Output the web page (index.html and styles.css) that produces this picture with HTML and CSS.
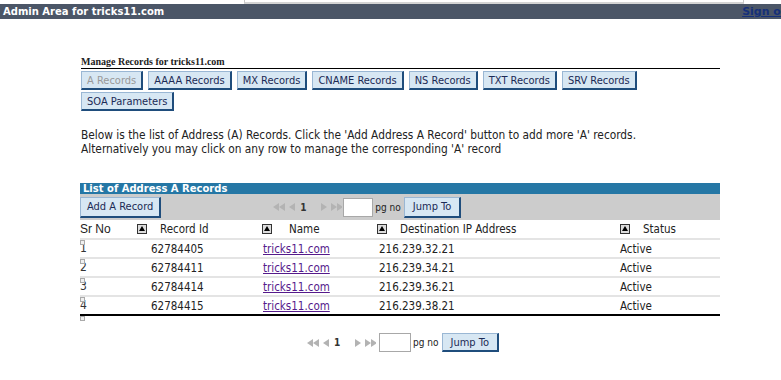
FILE: index.html
```html
<!DOCTYPE html>
<html lang="en">
<head>
    <meta charset="UTF-8">
    <title>Admin Area for tricks11.com</title>
    <link rel="stylesheet" href="styles.css">
</head>
<body>
    <div class="page">
        <div class="topframe"><div class="frame-box"></div></div>
        <div class="header">
            <span class="title">Admin Area for tricks11.com</span>
            <a href="#" class="signout">Sign out</a>
        </div>

        <div class="main">
            <h4 class="manage">Manage Records for tricks11.com</h4>
            <div class="tabs">
                <button class="btn tab" disabled>A Records</button>
                <button class="btn tab">AAAA Records</button>
                <button class="btn tab">MX Records</button>
                <button class="btn tab">CNAME Records</button>
                <button class="btn tab">NS Records</button>
                <button class="btn tab">TXT Records</button>
                <button class="btn tab">SRV Records</button>
                <button class="btn tab">SOA Parameters</button>
            </div>

            <p class="intro">Below is the list of Address (A) Records. Click the 'Add Address A Record' button to add more 'A' records.<br>
            Alternatively you may click on any row to manage the corresponding 'A' record</p>

            <div class="listbar">List of Address A Records</div>
            <div class="toolbar">
                <button class="btn">Add A Record</button>
                <div class="pager">
                    <svg class="arrows" width="70" height="10" viewBox="0 0 70 10">
                        <polygon points="7,1 7,9 1,5" />
                        <polygon points="13,1 13,9 7,5" />
                        <polygon points="23,1 23,9 17,5" />
                        <polygon points="49,1 49,9 55,5" />
                        <polygon points="59,1 59,9 65,5" />
                        <polygon points="65,1 65,9 71,5" />
                    </svg>
                    <span class="pagenum">1</span>
                    <input type="text" class="pginput">
                    <span class="pgno">pg no</span>
                    <button class="btn">Jump To</button>
                </div>
            </div>

            <div class="grid head">
                <div class="c1">Sr No</div>
                <div class="c2"><span class="sort"></span>Record Id</div>
                <div class="c3"><span class="sort"></span><span class="name-h">Name</span></div>
                <div class="c4"><span class="sort"></span>Destination IP Address</div>
                <div class="c5"><span class="sort"></span>Status</div>
            </div>
            <div class="grid row">
                <div class="c1"><span class="broken"></span>1</div>
                <div class="c2">62784405</div>
                <div class="c3"><a href="#">tricks11.com</a></div>
                <div class="c4">216.239.32.21</div>
                <div class="c5">Active</div>
            </div>
            <div class="grid row">
                <div class="c1"><span class="broken"></span>2</div>
                <div class="c2">62784411</div>
                <div class="c3"><a href="#">tricks11.com</a></div>
                <div class="c4">216.239.34.21</div>
                <div class="c5">Active</div>
            </div>
            <div class="grid row">
                <div class="c1"><span class="broken"></span>3</div>
                <div class="c2">62784414</div>
                <div class="c3"><a href="#">tricks11.com</a></div>
                <div class="c4">216.239.36.21</div>
                <div class="c5">Active</div>
            </div>
            <div class="grid row last">
                <div class="c1"><span class="broken"></span>4</div>
                <div class="c2">62784415</div>
                <div class="c3"><a href="#">tricks11.com</a></div>
                <div class="c4">216.239.38.21</div>
                <div class="c5">Active</div>
            </div>
            <div class="endmark"><span class="broken"></span></div>

            <div class="pager bottom">
                <svg class="arrows" width="70" height="10" viewBox="0 0 70 10">
                    <polygon points="7,1 7,9 1,5" />
                    <polygon points="13,1 13,9 7,5" />
                    <polygon points="23,1 23,9 17,5" />
                    <polygon points="49,1 49,9 55,5" />
                    <polygon points="59,1 59,9 65,5" />
                    <polygon points="65,1 65,9 71,5" />
                </svg>
                <span class="pagenum">1</span>
                <input type="text" class="pginput">
                <span class="pgno">pg no</span>
                <button class="btn">Jump To</button>
            </div>
        </div>
    </div>
</body>
</html>
```

FILE: styles.css
```css
html, body {
    margin: 0;
    overflow: hidden;
    background: #fff;
}
body {
    font-family: "DejaVu Sans Condensed", "DejaVu Sans", sans-serif;
    font-size: 11px;
    color: #222;
}
.page {
    width: 800px;
}
.topframe {
    height: 4px;
}
.frame-box {
    margin-left: 244px;
    width: 498px;
    height: 2px;
    border-left: 1px solid #c8c8c8;
    border-right: 1px solid #c8c8c8;
    border-bottom: 2px solid #d4d4d4;
}
.header {
    height: 15px;
    background: #4b5667;
    display: flex;
    justify-content: space-between;
    align-items: center;
    padding: 0 6px 0 3px;
    font-family: "DejaVu Sans", sans-serif;
    font-weight: bold;
    font-size: 10px;
}
.title {
    color: #fff;
}
.signout {
    color: #15307a;
    font-size: 11px;
}
.main {
    width: 640px;
    margin: 0 auto;
}
.manage {
    font-family: "Liberation Serif", serif;
    font-size: 10px;
    font-weight: bold;
    margin: 37px 0 0 1px;
    padding-bottom: 1px;
    border-bottom: 1px solid #000;
    line-height: 11px;
}
.tabs {
    display: flex;
    flex-wrap: wrap;
    gap: 2px 5px;
    padding: 2px 0 0 1px;
}
.btn {
    font-family: "DejaVu Sans Condensed", "DejaVu Sans", sans-serif;
    font-size: 11px;
    color: #1b2a55;
    background: #d7e7f3;
    border: 1px solid #9ab7d4;
    border-right: 2px solid #1f4d7c;
    border-bottom: 2px solid #1f4d7c;
    height: 19px;
    padding: 0 6px;
    margin: 0;
    line-height: 15px;
}
.tabs .btn {
    padding: 0 5px;
}
.tab:disabled {
    color: #999;
}
.intro {
    margin: 17px 0 0 1px;
    font-size: 11.8px;
    line-height: 14px;
}
.listbar {
    margin-top: 27px;
    background: #2577a5;
    color: #fff;
    font-family: "DejaVu Sans", sans-serif;
    font-weight: bold;
    font-size: 10px;
    height: 11px;
    line-height: 11px;
    padding-left: 3px;
}
.toolbar {
    background: #cccccc;
    height: 26px;
    display: flex;
    align-items: center;
}
.toolbar .btn {
    height: 21px;
}
.pager {
    display: flex;
    align-items: center;
    margin-left: 111px;
}
.pager .btn {
    padding: 0 8px;
}
.arrows {
    fill: #b3b3b3;
}
.pagenum {
    font-weight: bold;
    font-size: 10px;
    color: #333;
    margin: 0 0 0 -42px;
    width: 42px;
}
.pginput {
    width: 28px;
    height: 17px;
    border: 1px solid #a8a8a8;
    margin: 0 2px 0 1px;
    padding: 0;
    background: #fff;
}
.pgno {
    font-size: 10px;
    margin-right: 3px;
}
.grid {
    display: grid;
    grid-template-columns: 57px 125px 115px 243px 100px;
    align-items: center;
}
.head {
    height: 18px;
    font-size: 11.5px;
    border-bottom: 2px solid #e4e4e4;
}
.head .c1 {
    font-family: "Liberation Sans", sans-serif;
    font-size: 12px;
}
.sort {
    display: inline-block;
    width: 8px;
    height: 8px;
    border: 1px solid #333;
    background: #ddd;
    margin-right: 13px;
    vertical-align: -1px;
    position: relative;
}
.sort::after {
    content: "";
    position: absolute;
    left: 1px;
    top: 1px;
    border-left: 3px solid transparent;
    border-right: 3px solid transparent;
    border-bottom: 5px solid #000;
}
.name-h {
    margin-left: 4px;
}
.row {
    height: 17px;
    font-size: 11.5px;
    border-bottom: 2px solid #e4e4e4;
}
.row.last {
    border-bottom: 2px solid #000;
}
.row .c1 {
    position: relative;
    font-size: 12px;
    color: #333;
    align-self: start;
    line-height: 14px;
    padding-top: 1px;
}
.row .c2 {
    padding-left: 14px;
}
.row .c3 {
    padding-left: 1px;
}
.row .c4 {
    padding-left: 2px;
}
.row a {
    color: #551a8b;
}
.broken {
    position: absolute;
    left: 0;
    top: 0;
    width: 3px;
    height: 3px;
    border: 1px solid #aaa;
    background: #f0f0f0;
}
.endmark {
    position: relative;
    height: 4px;
}
.pager.bottom {
    margin: 13px 0 0 226px;
}
.pager.bottom .pginput {
    width: 30px;
    margin-left: 3px;
}
.pager.bottom .btn {
    height: 19px;
}
```
